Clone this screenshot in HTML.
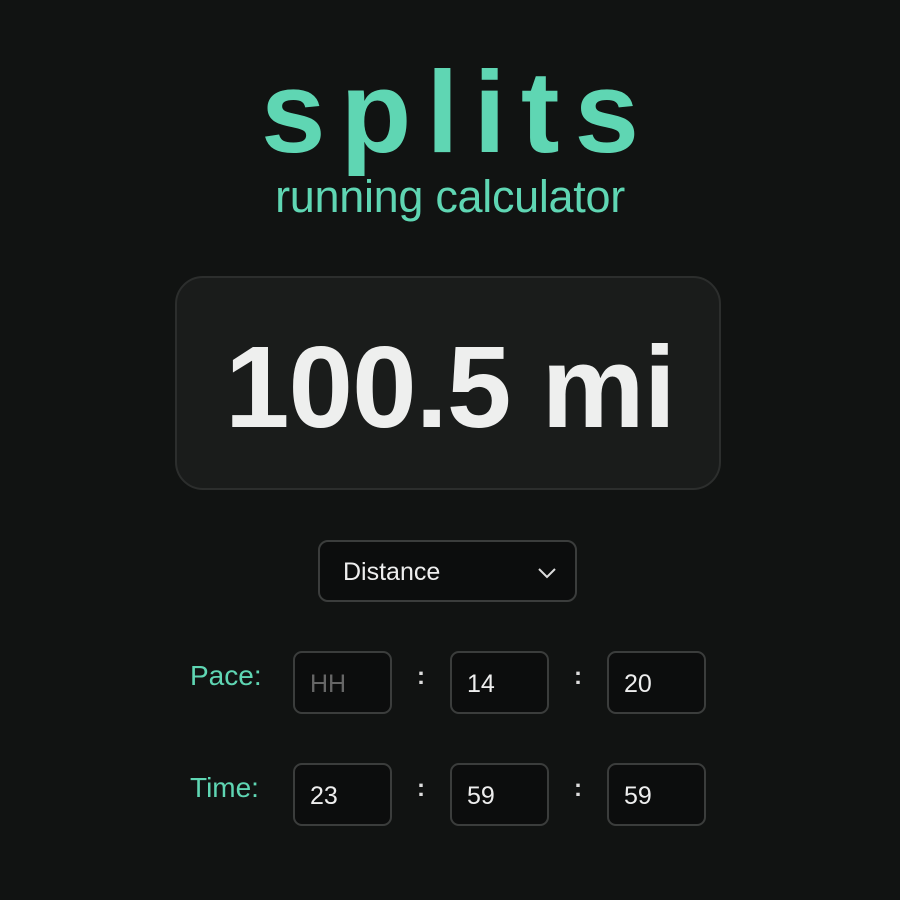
<!DOCTYPE html>
<html><head><meta charset="utf-8"><style>
*{margin:0;padding:0;box-sizing:border-box}
body{width:900px;height:900px;background:#111312;font-family:"Liberation Sans",sans-serif;position:relative;overflow:hidden}
.t{position:absolute;left:0;width:900px;text-align:center;color:#5fd6b3}
#title{top:42px;font-size:116px;font-weight:bold;letter-spacing:15px;padding-left:15px;line-height:140px}
#sub{top:171px;font-size:45px;line-height:52px;letter-spacing:-0.3px}
#card{position:absolute;left:175px;top:276px;width:546px;height:214px;border:2px solid #2c2e2d;border-radius:28px;background:#1a1c1b}
#big{position:absolute;left:0;width:546px;top:49px;text-align:center;color:#eeefee;font-weight:bold;font-size:116px;letter-spacing:-1px;line-height:120px}
#sel{position:absolute;left:318px;top:540px;width:259px;height:62px;border:2px solid #3b3d3c;border-radius:10px;background:#0c0d0d;color:#eee;font-size:25px;padding:16px 0 0 23px}
#sel svg{position:absolute;left:217px;top:25px}
.lbl{position:absolute;color:#5fd6b3;font-size:28px}
.box{position:absolute;width:99px;height:63px;border:2px solid #3b3d3c;border-radius:9px;background:#0c0d0d;color:#eee;font-size:25px;padding:17px 0 0 15px}
.c{position:absolute;color:#ddd;font-size:24px;font-weight:bold}
</style></head><body>
<div class="t" id="title">splits</div>
<div class="t" id="sub">running calculator</div>
<div id="card"><div id="big">100.5 mi</div></div>
<div id="sel">Distance<svg width="20" height="12" viewBox="0 0 20 12"><path d="M2 2l8 8 8-8" fill="none" stroke="#ddd" stroke-width="2"/></svg></div>
<div class="lbl" style="left:190px;top:660px">Pace:</div>
<div class="box" style="left:293px;top:651px;color:#666">HH</div>
<div class="c" style="left:417px;top:663px">:</div>
<div class="box" style="left:450px;top:651px">14</div>
<div class="c" style="left:574px;top:663px">:</div>
<div class="box" style="left:607px;top:651px">20</div>
<div class="lbl" style="left:190px;top:772px">Time:</div>
<div class="box" style="left:293px;top:763px">23</div>
<div class="c" style="left:417px;top:775px">:</div>
<div class="box" style="left:450px;top:763px">59</div>
<div class="c" style="left:574px;top:775px">:</div>
<div class="box" style="left:607px;top:763px">59</div>
</body></html>
